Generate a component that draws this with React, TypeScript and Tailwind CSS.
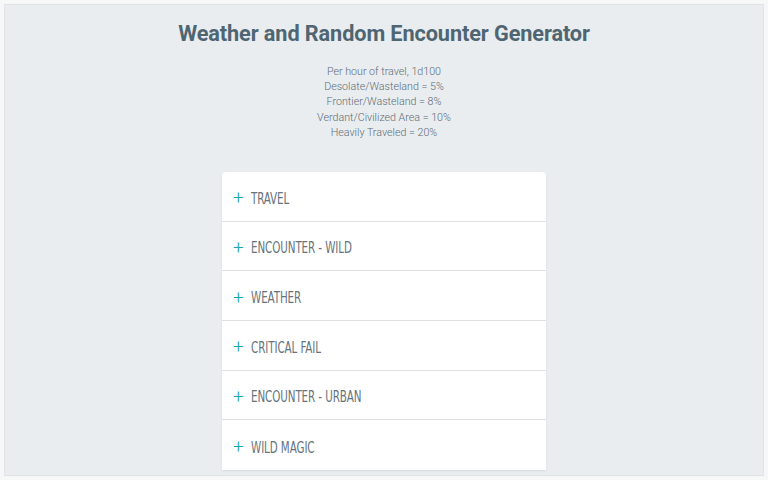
const rates = [
  "Per hour of travel, 1d100",
  "Desolate/Wasteland = 5%",
  "Frontier/Wasteland = 8%",
  "Verdant/Civilized Area = 10%",
  "Heavily Traveled = 20%",
];

const sections = [
  "TRAVEL",
  "ENCOUNTER - WILD",
  "WEATHER",
  "CRITICAL FAIL",
  "ENCOUNTER - URBAN",
  "WILD MAGIC",
];

const App = () => {
  return (
    <div className="w-full h-[480px] bg-[#f6f7f7] p-1 overflow-hidden">
      <div
        className="w-[760px] h-[472px] bg-[#e9edf0] border border-[#dfe3e6] flex flex-col items-center overflow-hidden"
        style={{ fontFamily: "Roboto, 'Liberation Sans', sans-serif" }}
      >
        <h1 className="mt-[14px] text-[21.7px] leading-[30px] font-bold text-[#4f6572] tracking-[-0.1px]">
          Weather and Random Encounter Generator
        </h1>
        <div className="mt-[15px] flex flex-col items-center text-[10.7px] leading-[15.2px] font-light text-[#5f6c75]">
          {rates.map((line, i) => (
            <p key={i}>{line}</p>
          ))}
        </div>
        <div className="mt-[32px] w-[324px] bg-white rounded-t-[4px] shadow-[0_1px_2px_rgba(0,0,0,0.08)]">
          {sections.map((name, i) => (
            <div
              key={i}
              className={`h-[49.7px] flex items-center pl-[11px] pt-[6px] gap-[7px] ${
                i < sections.length - 1 ? "border-b border-[#dde1e4]" : ""
              }`}
            >
              <span className="text-[#1aa3b0] text-[19px] leading-none font-light w-[11px] -mt-[3px]">
                +
              </span>
              <span
                className="inline-block origin-left scale-x-[0.74] text-[15.5px] text-[#66737c] tracking-[-0.1px]"
                style={{
                  fontFamily:
                    "'DejaVu Sans Condensed', 'Liberation Sans', sans-serif",
                  fontStretch: "condensed",
                }}
              >
                {name}
              </span>
            </div>
          ))}
        </div>
      </div>
    </div>
  );
};

export default App;
